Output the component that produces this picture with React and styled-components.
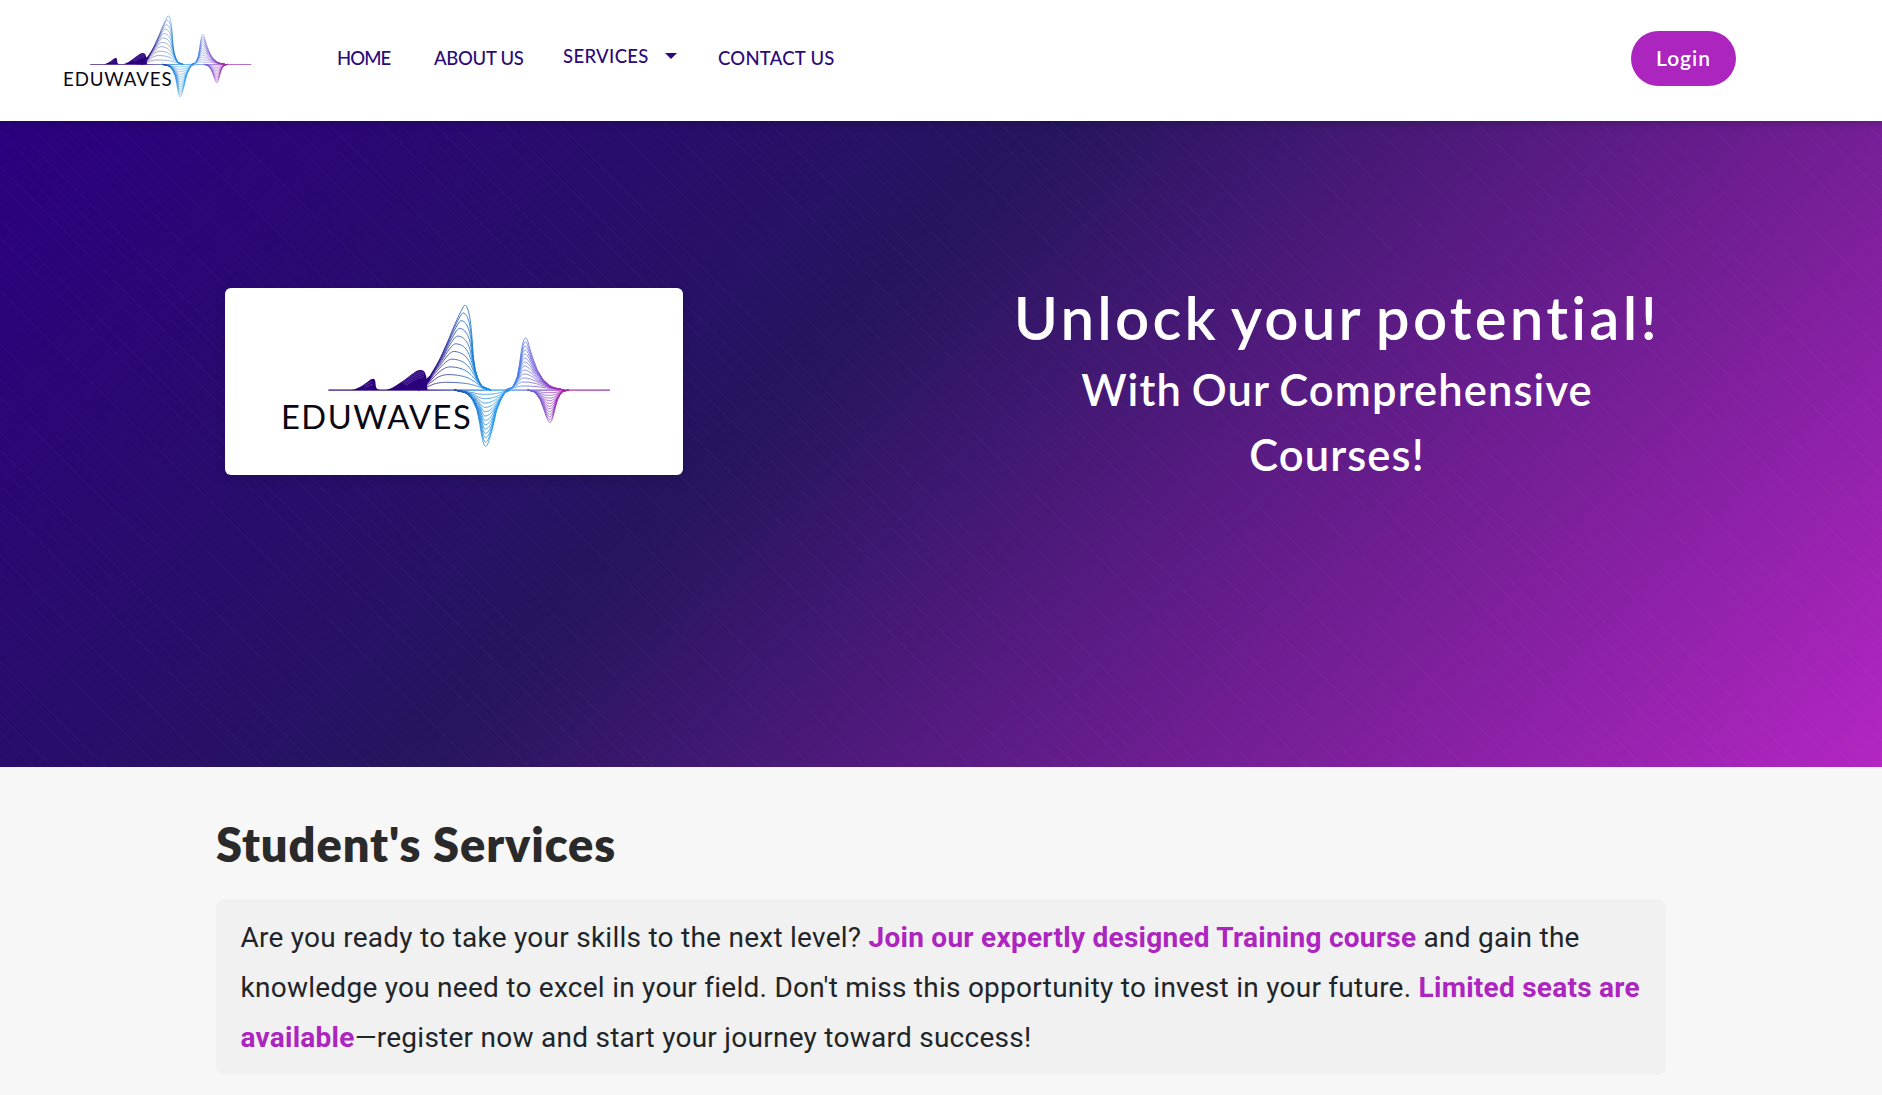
import React from "react";
import styled, { createGlobalStyle } from "styled-components";

const GlobalStyle = createGlobalStyle`
  *, *::before, *::after { box-sizing: border-box; }
  html, body { margin: 0; padding: 0; }
  body {
    background: #f7f7f7;
    color: #212529;
    font-family: Lato, "Open Sans", sans-serif;
    height: 1095px;
    overflow: hidden;
  }
  h1, h2, p { margin: 0; }
`;

const Header = styled.header`
  position: relative;
  display: flex;
  align-items: center;
  height: 121px;
  padding: 0 146px 0 31px;
  background: #fff;
  box-shadow: 0 2px 8px rgba(0, 0, 0, 0.22);
`;

const HeaderLogo = styled.a`
  display: block;
  width: 262px;
  height: 107px;
  margin-top: -3px;
`;

const Nav = styled.nav`
  display: flex;
  align-items: center;
  margin-left: 44px;
  margin-top: -6px;
`;

const NavLink = styled.a`
  display: flex;
  align-items: center;
  width: ${(p) => p.$width}px;
  padding-bottom: ${(p) => p.$lift || 0}px;
  color: #2c0a78;
  font-size: 18.5px;
  line-height: 24px;
  font-weight: 500;
  letter-spacing: ${(p) => p.$track || 0}px;
  white-space: nowrap;
  text-decoration: none;
`;

const Caret = styled.span`
  margin-left: 16px;
  margin-bottom: -1px;
  border: 6px solid transparent;
  border-top-color: #2c0a78;
  border-bottom: 0;
`;

const LoginButton = styled.button`
  width: 105px;
  height: 55px;
  margin-left: auto;
  margin-top: -4px;
  padding: 0 0 3px;
  border: 0;
  border-radius: 28px;
  background: #ad25bf;
  color: #fff;
  font: 600 21px/1 Lato, sans-serif;
  letter-spacing: 1px;
`;

const Hero = styled.section`
  display: flex;
  align-items: flex-start;
  justify-content: space-between;
  height: 646px;
  padding: 167px 217px 0 225px;
  background:
    repeating-linear-gradient(45deg, transparent 0 11.5px, rgba(255, 255, 255, 0.02) 11.5px 12.5px),
    linear-gradient(135deg, #2c007f 0%, #26155f 42%, #b326c2 100%);
`;

const LogoCard = styled.div`
  width: 458px;
  height: 187px;
  border-radius: 6px;
  background: #fff;
  box-shadow: 0 4px 10px rgba(0, 0, 0, 0.15);
  overflow: hidden;
`;

const HeroCopy = styled.div`
  width: 656px;
  color: #fff;
  text-align: center;
`;

const HeroTitle = styled.h1`
  margin-bottom: 11px;
  font-size: 60px;
  font-weight: 600;
  line-height: 58px;
  letter-spacing: 3.2px;
  word-spacing: -5px;
  white-space: nowrap;
`;

const HeroSubtitle = styled.p`
  font-size: 43.5px;
  font-weight: 600;
  line-height: 65px;
  letter-spacing: 1.1px;
  word-spacing: -2px;
`;

const Services = styled.section`
  padding: 47px 216px 0;
`;

const SectionTitle = styled.h2`
  color: #2a2a2a;
  font-size: 47px;
  font-weight: 800;
  line-height: 60px;
  letter-spacing: 0.9px;
`;

const Notice = styled.p`
  margin-top: 25px;
  padding: 14px 24.5px 12px;
  border-radius: 9px;
  background: #f1f1f1;
  color: #212529;
  font-family: Roboto, sans-serif;
  font-size: 28px;
  line-height: 50px;
  letter-spacing: 0.257px;
  white-space: nowrap;
`;

const Highlight = styled.strong`
  color: #ad25bf;
  font-weight: 700;
`;

const LogoSvg = styled.svg`
  display: block;
  width: 100%;
  height: 100%;
`;

const BASE = 306;

const WAVES = [
  {
    dir: -1, height: 254, count: 11, peak: [720, 658], spread: [14, 12],
    left: [[0, 580], [8, 596], [30, 610], [50, 620], [75, 635], [100, 648], [150, 670], [200, 689], [240, 704], [254, 709]],
    right: [[0, 798], [5, 778], [12, 770], [30, 760], [60, 751], [100, 745], [160, 741], [210, 737], [254, 733]],
  },
  {
    dir: 1, height: 169, count: 13, peak: [782, 778], spread: [20, 10],
    left: [[0, 688], [5, 715], [12, 728], [30, 743], [60, 756], [100, 764], [150, 771], [169, 773]],
    right: [[0, 855], [5, 842], [12, 837], [30, 827], [60, 815], [100, 806], [150, 795], [169, 791]],
  },
  {
    dir: -1, height: 156, count: 13, peak: [902, 894], spread: [8, 24],
    left: [[0, 842], [5, 858], [15, 867], [40, 877], [80, 884], [120, 889], [156, 893]],
    right: [[0, 1018], [5, 990], [12, 975], [30, 955], [60, 937], [100, 922], [130, 914], [156, 910]],
  },
  {
    dir: 1, height: 97, count: 12, peak: [975, 972], spread: [14, 8],
    left: [[0, 908], [4, 925], [12, 934], [30, 946], [60, 957], [90, 966], [97, 967]],
    right: [[0, 1030], [4, 1014], [12, 1006], [30, 997], [60, 989], [90, 983], [97, 982]],
  },
];

function edgeAt(edge, h) {
  for (let i = 1; i < edge.length; i++) {
    if (h <= edge[i][0]) {
      const [h0, x0] = edge[i - 1];
      const [h1, x1] = edge[i];
      return x0 + ((x1 - x0) * (h - h0)) / (h1 - h0);
    }
  }
  return edge[edge.length - 1][1];
}

function contour(wave, share) {
  const top = wave.height * share;
  const peakX = wave.peak[1] + (wave.peak[0] - wave.peak[1]) * share;
  const roundness = 3.2 + 6 * share ** 2;
  const side = (edge, inset) =>
    Array.from({ length: 33 }, (_, k) => {
      const u = Math.sin((k / 32) * (Math.PI / 2));
      const blend = 1 - Math.sqrt(Math.max(0, 1 - u ** roundness));
      const rim = edgeAt(edge, top * u) + inset * (1 - share) * Math.min(1, u * 1.6);
      const x = rim * (1 - blend) + peakX * blend;
      return `${x.toFixed(1)} ${(BASE + wave.dir * top * u).toFixed(1)}`;
    });
  const leftSide = side(wave.left, wave.spread[0]);
  const rightSide = side(wave.right, -wave.spread[1]).reverse();
  return "M" + [...leftSide, ...rightSide].join("L");
}

function Logo({ id }) {
  const ink = `url(#${id})`;
  return (
    <LogoSvg viewBox="0 0 1374 561" role="img" aria-label="Eduwaves">
      <defs>
        <linearGradient id={id} gradientUnits="userSpaceOnUse" x1="310" y1="0" x2="1155" y2="0">
          <stop offset="0" stopColor="#22006b" />
          <stop offset="0.35" stopColor="#2a0080" />
          <stop offset="0.43" stopColor="#2b3a9e" />
          <stop offset="0.51" stopColor="#1478d2" />
          <stop offset="0.6" stopColor="#229cf2" />
          <stop offset="0.66" stopColor="#3e8af0" />
          <stop offset="0.71" stopColor="#6c6bdc" />
          <stop offset="0.78" stopColor="#8a44c4" />
          <stop offset="0.84" stopColor="#b021ae" />
          <stop offset="1" stopColor="#8a2796" />
        </linearGradient>
      </defs>
      <path d="M380 306C405 302 425 283 438 274C446 270 450 272 451 281L453 298Q455 305 464 306Z" fill="#2b007d" />
      <path
        d="M482 306C510 301 540 272 570 252C581 245 592 244 599 252L604 266L607 306Z"
        fill="#2b007d"
      />
      <g fill="none" stroke="#8266b3" strokeWidth="1.5">
        <path d="M530 284Q566 255 588 250L597 256" />
        <path d="M534 287Q568 260 587 256L597 261" />
        <path d="M538 290Q568 266 586 262L596 267" />
        <path d="M542 293Q569 273 586 268L592 272" />
        <path d="M418 293L441 281M420 298L444 288" />
      </g>
      <path d="M548 306Q590 287 621 257L604 285L607 306Z" fill="#2b007d" />
      <g fill="none" stroke={ink} strokeWidth="2.5">
        {WAVES.map((wave, w) =>
          Array.from({ length: wave.count }, (_, i) => (
            <path key={`${w}-${i}`} d={contour(wave, (i + 1) / wave.count)} />
          ))
        )}
      </g>
      <rect x="310" y="304.5" width="845" height="3.5" fill={ink} />
      <text
        x="168"
        y="422"
        fontFamily="Lato, sans-serif"
        fontSize="98"
        textLength="569"
        lengthAdjust="spacing"
        fill="#090814"
      >
        EDUWAVES
      </text>
    </LogoSvg>
  );
}

export default function App() {
  return (
    <>
      <GlobalStyle />
      <Header>
        <HeaderLogo>
          <Logo id="ink-header" />
        </HeaderLogo>
        <Nav>
          <NavLink $width={97} $track={-0.9}>HOME</NavLink>
          <NavLink $width={129} $track={-0.3}>ABOUT US</NavLink>
          <NavLink $width={155} $lift={4} $track={0.35}>
            SERVICES
            <Caret />
          </NavLink>
          <NavLink $width={120} $track={0.25}>CONTACT US</NavLink>
        </Nav>
        <LoginButton>Login</LoginButton>
      </Header>
      <Hero>
        <LogoCard>
          <Logo id="ink-hero" />
        </LogoCard>
        <HeroCopy>
          <HeroTitle>Unlock your potential!</HeroTitle>
          <HeroSubtitle>
            With Our Comprehensive
            <br />
            Courses!
          </HeroSubtitle>
        </HeroCopy>
      </Hero>
      <Services>
        <SectionTitle>Student's Services</SectionTitle>
        <Notice>
          Are you ready to take your skills to the next level?{" "}
          <Highlight>Join our expertly designed Training course</Highlight> and gain the
          <br />
          knowledge you need to excel in your field. Don't miss this opportunity to invest in your future.{" "}
          <Highlight>Limited seats are</Highlight>
          <br />
          <Highlight>available</Highlight>—register now and start your journey toward success!
        </Notice>
      </Services>
    </>
  );
}
